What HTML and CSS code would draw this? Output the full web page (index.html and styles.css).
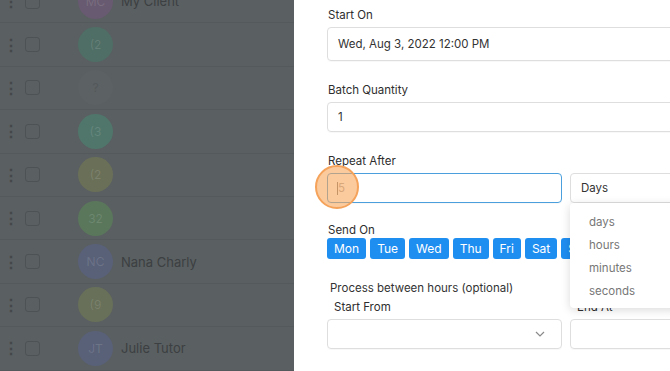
FILE: index.html
```html
<!DOCTYPE html>
<html lang="en">
<head>
  <meta charset="UTF-8" />
  <title>Schedule</title>
  <link rel="stylesheet" href="styles.css">
</head>
<body>
  <div class="screen">
    <aside class="list">
      <div class="rows">
        <div class="row"><span class="dots">⋮</span><span class="check"></span><span class="avatar av-purple">MC</span><span class="name">My Client</span></div>
        <div class="row"><span class="dots">⋮</span><span class="check"></span><span class="avatar av-teal">(2</span></div>
        <div class="row"><span class="dots">⋮</span><span class="check"></span><span class="avatar av-grey">?</span></div>
        <div class="row"><span class="dots">⋮</span><span class="check"></span><span class="avatar av-teal2">(3</span></div>
        <div class="row"><span class="dots">⋮</span><span class="check"></span><span class="avatar av-olive">(2</span></div>
        <div class="row"><span class="dots">⋮</span><span class="check"></span><span class="avatar av-green">32</span></div>
        <div class="row"><span class="dots">⋮</span><span class="check"></span><span class="avatar av-blue">NC</span><span class="name">Nana Charly</span></div>
        <div class="row"><span class="dots">⋮</span><span class="check"></span><span class="avatar av-olive2">(9</span></div>
        <div class="row"><span class="dots">⋮</span><span class="check"></span><span class="avatar av-blue">JT</span><span class="name">Julie Tutor</span></div>
      </div>
    </aside>

    <main class="panel">
      <div class="field">
        <label>Start On</label>
        <div class="input tall">Wed, Aug 3, 2022 12:00 PM</div>
      </div>

      <div class="field">
        <label>Batch Quantity</label>
        <div class="input">1</div>
      </div>

      <div class="field repeat">
        <label>Repeat After</label>
        <div class="pair">
          <div class="input focus"><span class="caret"></span><span class="ghost">5</span></div>
          <div class="input">Days</div>
        </div>
        <span class="click-dot"></span>
        <ul class="menu">
          <li>days</li>
          <li>hours</li>
          <li>minutes</li>
          <li>seconds</li>
        </ul>
      </div>

      <div class="field">
        <label class="send-label">Send On</label>
        <div class="days">
          <button class="day">Mon</button>
          <button class="day">Tue</button>
          <button class="day">Wed</button>
          <button class="day">Thu</button>
          <button class="day">Fri</button>
          <button class="day">Sat</button>
          <button class="day">Sun</button>
        </div>
      </div>

      <div class="hours">
        <p class="hours-title">Process between hours (optional)</p>
        <div class="pair">
          <div>
            <label class="sub">Start From</label>
            <div class="input select">
              <svg class="chev" width="10" height="6" viewBox="0 0 10 6"><path d="M1 1l4 4 4-4" fill="none" stroke="#8a8a8a" stroke-width="1.2"/></svg>
            </div>
          </div>
          <div>
            <label class="sub">End At</label>
            <div class="input select"></div>
          </div>
        </div>
      </div>
    </main>
  </div>
</body>
</html>
```

FILE: styles.css
```css
* {
  box-sizing: border-box;
}

body {
  margin: 0;
  font-family: 'Inter', 'Noto Sans', sans-serif;
  color: #333;
  overflow: hidden;
}

.screen {
  display: flex;
  width: 670px;
  height: 371px;
  overflow: hidden;
}

/* dimmed list behind the drawer */
.list {
  width: 294px;
  flex-shrink: 0;
  background-color: #5a5f61;
  overflow: hidden;
}

.rows {
  margin-top: -20px;
}

.row {
  display: flex;
  align-items: center;
  height: 43.4px;
  border-bottom: 1px solid #54595b;
}

.dots {
  width: 25px;
  padding-left: 3px;
  color: #44484a;
  font-size: 16px;
  font-weight: bold;
}

.check {
  width: 15px;
  height: 15px;
  border: 1px solid #4d5254;
  border-radius: 3px;
  margin-right: 38px;
}

.avatar {
  width: 35px;
  height: 35px;
  border-radius: 50%;
  display: flex;
  align-items: center;
  justify-content: center;
  font-size: 12px;
  color: rgba(255, 255, 255, 0.12);
  margin-right: 8px;
}

.av-purple { background-color: #685a70; }
.av-teal { background-color: #4f6e65; }
.av-grey { background-color: #5c6163; color: #53585a; }
.av-teal2 { background-color: #50766b; }
.av-olive { background-color: #6a7058; }
.av-green { background-color: #5a775c; }
.av-blue { background-color: #596178; }
.av-olive2 { background-color: #687059; }

.name {
  font-size: 13px;
  color: #3c4042;
}

/* drawer */
.panel {
  position: relative;
  flex: 1;
  background-color: #fff;
  padding: 7px 0 0 33px;
}

.panel label {
  display: block;
  font-size: 11.5px;
  line-height: 16px;
  margin: 0 0 4px 1px;
  color: #2e2e2e;
}

.field {
  width: 480px;
  margin-bottom: 21px;
}

.input {
  position: relative;
  height: 30px;
  border: 1px solid #dedede;
  border-radius: 4px;
  padding: 0 10px;
  font-size: 11.5px;
  display: flex;
  align-items: center;
  color: #333;
  box-shadow: 0 1px 1px rgba(0, 0, 0, 0.03);
}

.input.tall {
  height: 34px;
}

.pair {
  display: grid;
  grid-template-columns: 235px 235px;
  gap: 8px;
  width: 480px;
}

.repeat {
  position: relative;
  margin-bottom: 19px;
}

.input.focus {
  border: 1.5px solid #4a9fdc;
  padding-left: 9px;
}

.caret {
  width: 1px;
  height: 13px;
  background-color: #777;
}

.ghost {
  color: #a7a7a7;
}

.click-dot {
  position: absolute;
  left: -12px;
  top: 12px;
  width: 44px;
  height: 44px;
  border-radius: 50%;
  border: 2px solid #f5a25a;
  background-color: rgba(248, 166, 92, 0.6);
}

.menu {
  position: absolute;
  left: 243px;
  top: 50px;
  width: 200px;
  margin: 0;
  padding: 8px 0 5px;
  list-style: none;
  background-color: #fff;
  border-radius: 4px;
  box-shadow: 0 2px 10px rgba(0, 0, 0, 0.15);
  z-index: 2;
}

.menu li {
  height: 23px;
  line-height: 23px;
  padding-left: 19px;
  font-size: 11.5px;
  color: #777;
}

.panel .send-label {
  margin-bottom: 0;
}

.days {
  display: flex;
  gap: 4px;
}

.day {
  border: none;
  border-radius: 3px;
  background-color: #1f8ef1;
  color: #fff;
  font-family: inherit;
  font-size: 12px;
  height: 21px;
  padding: 0 7px;
}

.hours {
  width: 480px;
}

.hours-title {
  margin: 0 0 3px 3px;
  font-size: 11.5px;
  line-height: 16px;
}

.panel .sub {
  margin-left: 7px;
}

.select {
  justify-content: flex-end;
  padding-right: 16px;
}
```
